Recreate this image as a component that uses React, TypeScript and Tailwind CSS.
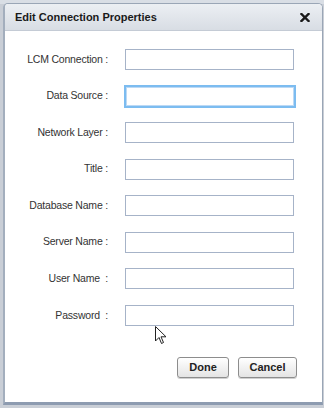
import React from 'react';

const fields = [
  'LCM Connection :',
  'Data Source :',
  'Network Layer :',
  'Title :',
  'Database Name :',
  'Server Name :',
  'User Name  :',
  'Password  :',
];

const App: React.FC = () => {
  return (
    <div className="w-[324px] h-[408px] bg-[#c9ced6] relative overflow-hidden" style={{ fontFamily: '"Liberation Sans", Arial, sans-serif' }}>
      <div className="absolute left-0 top-0 w-full h-[4px] bg-[#d9dee5]"></div>
      <div className="absolute left-[3px] top-[3px] w-[320px] h-[402px] flex flex-col rounded-t-[5px] border border-[#9aa6b6] border-b-[3px] border-b-[#8d9bb0] border-l-[2px] border-l-[#a3aebd] bg-white overflow-hidden">
        {/* Title bar */}
        <div className="h-[27px] shrink-0 flex items-center justify-between pl-[10px] pr-[11px] bg-gradient-to-b from-[#eceff3] to-[#d8dde4] border-b border-[#c4cbd5]">
          <span className="text-[11px] font-bold text-[#1a1a1a]">Edit Connection Properties</span>
          <svg width="10" height="9" viewBox="0 0 10 9" className="mr-[1px]">
            <path d="M1.5 1 L8.5 8 M8.5 1 L1.5 8" stroke="#1a1a1a" strokeWidth="2.4" strokeLinecap="square" />
          </svg>
        </div>

        {/* Form */}
        <div className="flex flex-col gap-[15.57px] pt-[18px]">
          {fields.map((label, i) => (
            <div key={label} className="flex items-center h-[21px]">
              <div className="w-[103px] text-right text-[10.5px] tracking-[-0.2px] text-[#333] whitespace-pre">{label}</div>
              <div className="w-[17px]"></div>
              {i === 1 ? (
                <div className="w-[172px] h-[23px] -ml-[1px] border-[2px] border-[#7cbcf0] bg-white shadow-[inset_0_0_0_1px_#bcd9f5]"></div>
              ) : (
                <div className="w-[169px] h-[21px] border border-[#a6b3c8] bg-white"></div>
              )}
            </div>
          ))}
        </div>

        {/* Buttons */}
        <div className="flex justify-end gap-[9px] pr-[25px] mt-[31px]">
          <button className="w-[52px] h-[21px] rounded-[3px] border border-[#8d8d8d] bg-gradient-to-b from-white to-[#e4e4e4] text-[11px] font-bold text-[#222] shadow-[0_1px_0_#d0d0d0]">
            Done
          </button>
          <button className="w-[59px] h-[21px] rounded-[3px] border border-[#8d8d8d] bg-gradient-to-b from-white to-[#e4e4e4] text-[11px] font-bold text-[#222] shadow-[0_1px_0_#d0d0d0]">
            Cancel
          </button>
        </div>
      </div>

      {/* Mouse cursor */}
      <svg className="absolute left-[155px] top-[326px]" width="13" height="20" viewBox="0 0 13 20">
        <path d="M0.5 0.5 L0.5 15 L4 11.5 L6.5 17.5 L8.5 16.5 L6 10.8 L11 10.8 Z" fill="white" stroke="#222" strokeWidth="1" strokeLinejoin="miter" />
      </svg>
    </div>
  );
};

export default App;
